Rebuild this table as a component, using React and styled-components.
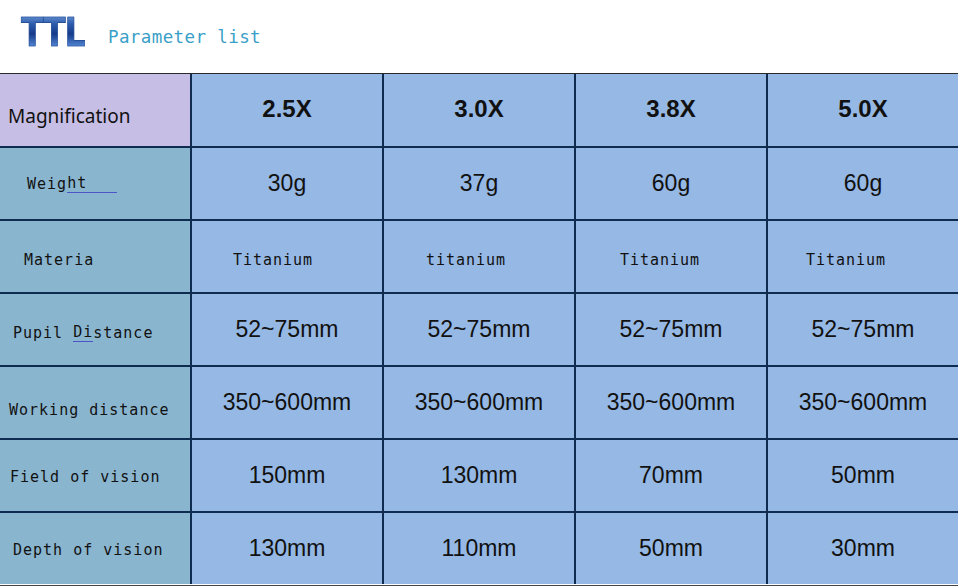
import React from 'react';
import styled, { createGlobalStyle } from 'styled-components';

const GlobalStyle = createGlobalStyle`
  html, body {
    margin: 0;
    padding: 0;
    background: #fff;
  }
  body {
    font-family: 'Liberation Sans', Arial, sans-serif;
  }
`;

// Page header
const Page = styled.div`
  width: 958px;
  height: 586px;
  overflow: hidden;
  background: #fff;
`;

const TitleBar = styled.header`
  height: 73px;
  display: flex;
  align-items: flex-start;
  padding: 12px 0 0 21px;
  box-sizing: border-box;
`;

const Logo = styled.span`
  display: inline-block;
  font-family: 'DejaVu Sans', sans-serif;
  font-weight: 700;
  font-size: 39px;
  line-height: 42px;
  letter-spacing: -1px;
  margin-right: -12px;
  transform: scaleX(0.84);
  transform-origin: left center;
  -webkit-text-stroke: 0.6px #1d4590;
  background: linear-gradient(180deg, #7fa6dd 0%, #2d5dae 28%, #153b88 52%, #4a7cca 78%, #b3cbef 100%);
  -webkit-background-clip: text;
  background-clip: text;
  color: transparent;
`;

const Subtitle = styled.span`
  margin: 15px 0 0 23px;
  font-family: 'DejaVu Sans Mono', 'Liberation Mono', monospace;
  font-size: 17.5px;
  letter-spacing: 0.4px;
  color: #3a9fc8;
  line-height: 20px;
`;

// Table
const TableWrap = styled.div`
  border-top: 1px solid #2a2a2a;
  border-bottom: 1px solid #444;
  padding-bottom: 1px;
  background: #fff;
`;

const Grid = styled.div`
  display: grid;
  grid-template-columns: repeat(5, 190px);
  grid-template-rows: 72px repeat(6, 71px);
  gap: 2px;
  background: #0f2b4f;
  width: 958px;
`;

const LabelCell = styled.div`
  background: ${p => (p.head ? '#c6bee5' : '#8ab5cf')};
  display: flex;
  align-items: center;
  padding-left: ${p => p.indent}px;
  padding-top: ${p => p.drop || 0}px;
  box-sizing: border-box;
  color: #111;
  font-family: ${p => (p.head
    ? "'Noto Sans', 'DejaVu Sans', sans-serif"
    : "'DejaVu Sans Mono', 'Liberation Mono', monospace")};
  font-size: ${p => (p.head ? '19px' : '15px')};
  letter-spacing: ${p => (p.head ? '0' : '1px')};
  white-space: pre;
`;

const ValueCell = styled.div`
  background: #95b8e4;
  display: flex;
  align-items: center;
  justify-content: center;
  padding-right: ${p => p.shift || 0}px;
  box-sizing: border-box;
  color: #111;
  font-family: 'Liberation Sans', Arial, sans-serif;
  font-size: 23px;
  white-space: nowrap;
`;

const HeadValue = styled(ValueCell)`
  font-weight: 700;
  font-size: 24px;
  padding-bottom: 2px;
`;

const MonoValue = styled(ValueCell)`
  font-family: 'DejaVu Sans Mono', 'Liberation Mono', monospace;
  font-size: 15px;
  letter-spacing: 1px;
  padding-top: 6px;
`;

const Mark = styled.span`
  border-bottom: 1px solid #4a55c8;
`;

const magnifications = ['2.5X', '3.0X', '3.8X', '5.0X'];

const rows = [
  {
    label: <>Weig<Mark>ht</Mark>  <Mark>   </Mark></>,
    indent: 27,
    values: ['30g', '37g', '60g', '60g'],
  },
  {
    label: 'Materia',
    indent: 24,
    drop: 6,
    mono: true,
    values: ['Titanium', 'titanium', 'Titanium', 'Titanium'],
    shifts: [28, 26, 22, 34],
  },
  {
    label: <>Pupil <Mark>Di</Mark>stance</>,
    indent: 13,
    drop: 6,
    values: ['52~75mm', '52~75mm', '52~75mm', '52~75mm'],
  },
  {
    label: 'Working distance',
    indent: 9,
    drop: 14,
    values: ['350~600mm', '350~600mm', '350~600mm', '350~600mm'],
  },
  {
    label: 'Field of vision',
    indent: 10,
    drop: 2,
    values: ['150mm', '130mm', '70mm', '50mm'],
  },
  {
    label: 'Depth of vision',
    indent: 13,
    drop: 2,
    values: ['130mm', '110mm', '50mm', '30mm'],
  },
];

export default function App() {
  return (
    <Page>
      <GlobalStyle />
      <TitleBar>
        <Logo>TTL</Logo>
        <Subtitle>Parameter list</Subtitle>
      </TitleBar>
      <TableWrap>
        <Grid>
          <LabelCell head indent={8} drop={12}>Magnification</LabelCell>
          {magnifications.map(m => (
            <HeadValue key={m}>{m}</HeadValue>
          ))}
          {rows.map((row, r) => (
            <React.Fragment key={r}>
              <LabelCell indent={row.indent} drop={row.drop}>{row.label}</LabelCell>
              {row.values.map((v, i) =>
                row.mono ? (
                  <MonoValue key={i} shift={row.shifts[i]}>{v}</MonoValue>
                ) : (
                  <ValueCell key={i}>{v}</ValueCell>
                )
              )}
            </React.Fragment>
          ))}
        </Grid>
      </TableWrap>
    </Page>
  );
}
